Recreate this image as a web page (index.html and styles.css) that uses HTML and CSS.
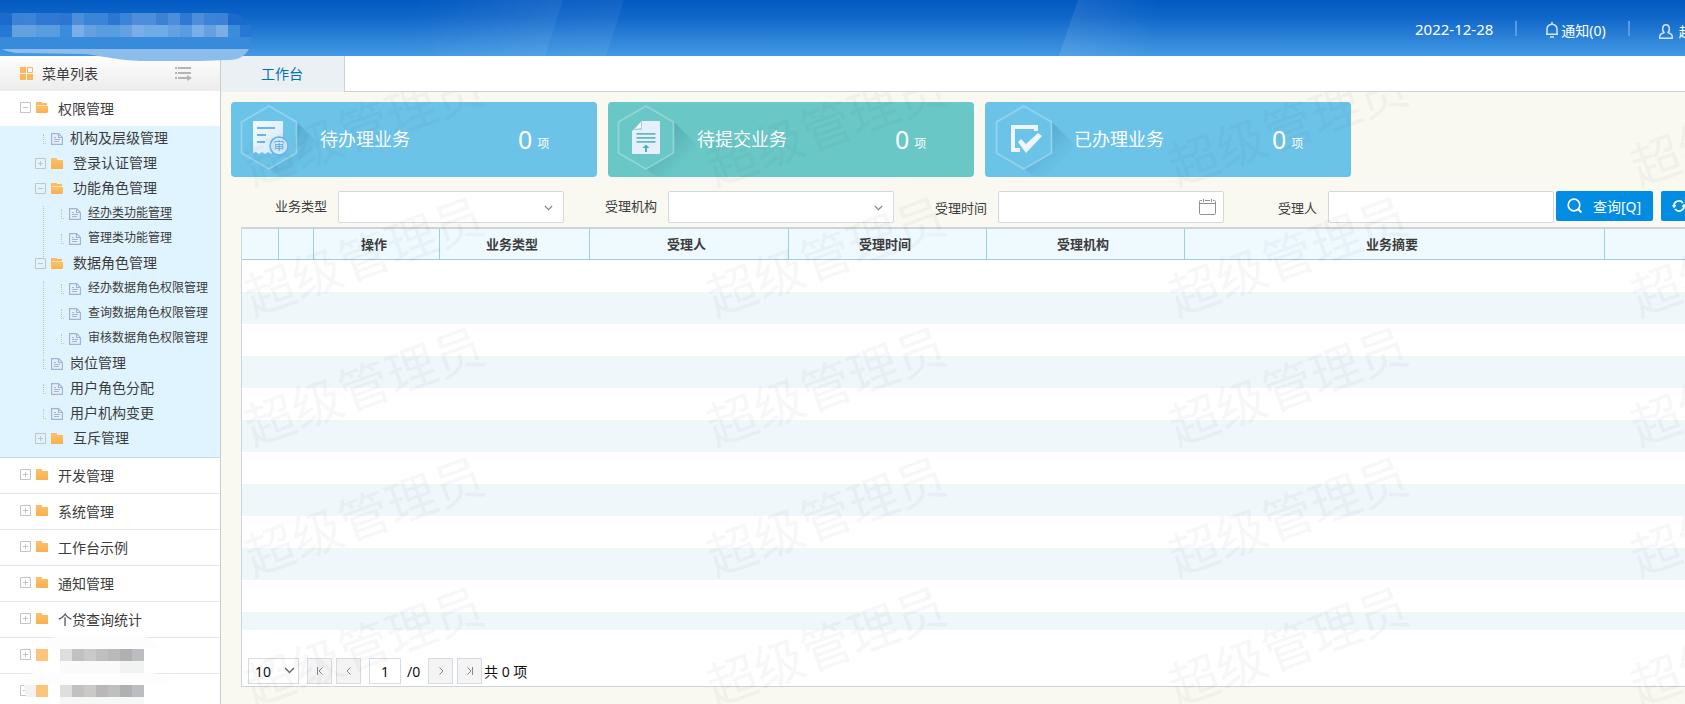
FILE: index.html
```html
<!DOCTYPE html>
<html lang="zh-CN">
<head>
<meta charset="utf-8">
<title>工作台</title>
<link rel="stylesheet" href="styles.css">
</head>
<body>
<svg class="defs" aria-hidden="true">
  <defs>
    <linearGradient id="g-folder" x1="0" y1="0" x2="0" y2="1"><stop offset="0" stop-color="#fdc16b"/><stop offset="1" stop-color="#f8b050"/></linearGradient>
    <linearGradient id="g-paper" x1="0" y1="0" x2="1" y2="1"><stop offset="0" stop-color="#f4fbff"/><stop offset="1" stop-color="#cfe8fb"/></linearGradient>
    <linearGradient id="g-shade" gradientUnits="userSpaceOnUse" x1="52" y1="36" x2="76" y2="60"><stop offset="0" stop-color="#0a4c74" stop-opacity=".2"/><stop offset="1" stop-color="#0a4c74" stop-opacity="0"/></linearGradient>
    <linearGradient id="g-ray" x1="0" y1="0" x2="1" y2="0"><stop offset="0" stop-color="#fff" stop-opacity="0"/><stop offset="1" stop-color="#fff" stop-opacity=".06"/></linearGradient>
    <linearGradient id="g-ray2" x1="0" y1="0" x2="1" y2="0"><stop offset="0" stop-color="#fff" stop-opacity=".1"/><stop offset="1" stop-color="#fff" stop-opacity="0"/></linearGradient>
    <symbol id="folder" viewBox="0 0 12 12"><path fill="url(#g-folder)" d="M0 0h6v2h6v9H0z"/></symbol>
    <symbol id="folder-open" viewBox="0 0 12 12"><path fill="#fdb95c" d="M0 0h6v1h5v3H0zM0 3h1v8H0z"/><path fill="#ffe3b5" d="M1 3h10v1H1z"/><path fill="url(#g-folder)" d="M1 4h11v6l-1 1H1z"/></symbol>
    <symbol id="doc" viewBox="0 0 12 12"><path fill="#e6f1fc" stroke="#9fb4d8" stroke-width="1.200" d="M.6.6h7l3.800 3.800v7H.6z"/><path fill="none" stroke="#9fb4d8" stroke-width="1.200" d="M7.500.500v4h4"/><path stroke="#9fb4d8" stroke-width="1.200" d="M3 4.500h2M3 6.500h6M3 8.500h5"/></symbol>
    <symbol id="plus" viewBox="0 0 11 11"><path fill="none" stroke="#c4c4c4" d="M.5.5h10v10H.5zM3 5.500h5M5.500 3v5"/></symbol>
    <symbol id="minus" viewBox="0 0 11 11"><path fill="none" stroke="#c4c4c4" d="M.5.5h10v10H.5zM3 5.500h5"/></symbol>
    <symbol id="down" viewBox="0 0 10 6"><path fill="none" stroke="currentColor" stroke-width="1.300" d="M1 .8l4 4 4-4"/></symbol>
    <symbol id="hex" viewBox="0 0 89 75"><path fill="url(#g-shade)" d="M66 20L88 42v32H48L38 67l28-16z"/></symbol>
    <symbol id="hexline" viewBox="0 0 89 75"><path fill="none" stroke="#fff" stroke-opacity=".27" stroke-width="1.800" d="M38 4l27.500 16v31L38 67 10.500 51V20z"/></symbol>
  </defs>
</svg>

<header class="top">
  <svg class="rays" width="1685" height="56" aria-hidden="true">
    <path fill="url(#g-ray)" d="M420 0h143l-18 56H400z"/>
    <path fill="url(#g-ray)" d="M440 0h184l-18 56H420z"/>
    <path fill="url(#g-ray2)" d="M1078 0h82v56h-101z"/>
  </svg>
  <svg class="brand" width="253" height="62" aria-hidden="true">
    <path fill="#1b6bcd" d="M0 13h130c20 3 50 1 70 0h30l10 2 6 10H0z"/>
    <path fill="#2579d4" d="M0 25h250l2 12H0z"/>
    <path fill="#388bdb" d="M0 37h252l-3 12H0z"/>
    <path fill="#8dbeeb" d="M2 49h247c-5 9-13 11-21 11l-28 1h-60c-20-1-35-4-54-7l-66-1C12 53 6 51 2 49z"/>
    <g>
      <path fill="#3b82d6" d="M12 13h12v12H12zM156 13h12v12h-12zM216 13h12v12h-12z"/>
      <path fill="#3079d2" d="M36 13h24v12H36zM180 13h12v12h-12z"/>
      <path fill="#3b85d8" d="M24 13h12v12H24zM84 13h24v12H84zM120 13h12v12h-12zM204 13h12v12h-12z"/>
      <path fill="#2b76d1" d="M60 13h24v12H60zM108 13h12v12h-12z"/>
      <path fill="#4c8edb" d="M72 13h12v12H72zM132 13h24v12h-24zM168 13h12v12h-12zM192 13h12v12h-12z"/>
      <path fill="#65a1e0" d="M12 25h24v12H12zM84 25h12v12H84zM120 25h12v12h-12zM168 25h12v12h-12zM204 25h12v12h-12z"/>
      <path fill="#579ddf" d="M36 25h24v12H36zM96 25h24v12H96zM180 25h12v12h-12z"/>
      <path fill="#3b8cda" d="M60 25h12v12H60zM228 25h12v12h-12z"/>
      <path fill="#7bade7" d="M72 25h12v12H72zM132 25h12v12h-12zM192 25h12v12h-12zM216 25h12v12h-12z"/>
      <path fill="#6fabe5" d="M144 25h24v12h-24z"/>
    </g>
  </svg>
  <div class="top-right">
    <span class="date">2022-12-28</span>
    <i class="sep"></i>
    <a class="top-link" href="#"><svg width="12" height="16" viewBox="0 0 12 16"><path fill="none" stroke="#d5e7fa" stroke-width="1.500" d="M1 11.500V7a5 4.800 0 0 1 10 0v4.500M0 12.200h12M6 0v2"/><path stroke="#d5e7fa" stroke-width="1.500" d="M4 15h4"/></svg>通知(0)</a>
    <i class="sep sep-b"></i>
    <a class="top-link user" href="#"><svg width="14" height="15" viewBox="0 0 14 15"><path fill="none" stroke="#d5e7fa" stroke-width="1.500" d="M5 8.500C2.500 6 3.500.800 7 .800S11.500 6 9 8.500c1 1 4.200 1 4.200 3.500v2.200H.8V12C.8 9.500 4 9.500 5 8.500z"/></svg>超级管理员</a>
  </div>
</header>

<div class="body">
  <nav class="side">
    <div class="side-head">
      <svg width="13" height="13" viewBox="0 0 13 13"><path fill="#fbb75a" d="M0 0h6v6H0zM0 7h6v6H0zM7 7h6v6H7z"/><path fill="none" stroke="#fbb75a" d="M7.500.500h5v5h-5z"/></svg>
      <span class="side-title">菜单列表</span>
      <button class="collapse" aria-label="收起菜单"><svg width="17" height="14" viewBox="0 0 17 14"><path fill="#b5b5b5" d="M0 0h2v2H0zM3 0h13v2H3zM0 5h2v2H0zM3 5h13v2H3zM0 10h2v2H0zM3 10h9V8l5 3-5 3v-2H3z"/></svg></button>
    </div>
    <ul class="tree">
      <li class="l1"><button class="tg" aria-label="收起"><svg><use href="#minus"/></svg></button><svg class="ic"><use href="#folder-open"/></svg><a href="#">权限管理</a></li>
      <li class="sub">
        <ul>
          <li class="row leaf"><i class="dots"></i><svg class="ic"><use href="#doc"/></svg><a href="#">机构及层级管理</a></li>
          <li class="row dir"><button class="tg" aria-label="展开"><svg><use href="#plus"/></svg></button><svg class="ic"><use href="#folder"/></svg><a href="#">登录认证管理</a></li>
          <li class="row dir"><button class="tg" aria-label="收起"><svg><use href="#minus"/></svg></button><svg class="ic"><use href="#folder-open"/></svg><a href="#">功能角色管理</a></li>
          <li class="rail"><ul>
            <li class="row leaf3"><i class="dots"></i><svg class="ic"><use href="#doc"/></svg><a class="active" href="#">经办类功能管理</a></li>
            <li class="row leaf3"><i class="dots"></i><svg class="ic"><use href="#doc"/></svg><a href="#">管理类功能管理</a></li>
          </ul></li>
          <li class="row dir"><button class="tg" aria-label="收起"><svg><use href="#minus"/></svg></button><svg class="ic"><use href="#folder-open"/></svg><a href="#">数据角色管理</a></li>
          <li class="rail"><ul>
            <li class="row leaf3"><i class="dots"></i><svg class="ic"><use href="#doc"/></svg><a href="#">经办数据角色权限管理</a></li>
            <li class="row leaf3"><i class="dots"></i><svg class="ic"><use href="#doc"/></svg><a href="#">查询数据角色权限管理</a></li>
            <li class="row leaf3"><i class="dots"></i><svg class="ic"><use href="#doc"/></svg><a href="#">审核数据角色权限管理</a></li>
          </ul></li>
          <li class="row leaf"><i class="dots"></i><svg class="ic"><use href="#doc"/></svg><a href="#">岗位管理</a></li>
          <li class="row leaf"><i class="dots"></i><svg class="ic"><use href="#doc"/></svg><a href="#">用户角色分配</a></li>
          <li class="row leaf"><i class="dots"></i><svg class="ic"><use href="#doc"/></svg><a href="#">用户机构变更</a></li>
          <li class="row dir"><button class="tg" aria-label="展开"><svg><use href="#plus"/></svg></button><svg class="ic"><use href="#folder"/></svg><a href="#">互斥管理</a></li>
        </ul>
      </li>
      <li class="l1"><button class="tg" aria-label="展开"><svg><use href="#plus"/></svg></button><svg class="ic"><use href="#folder"/></svg><a href="#">开发管理</a></li>
      <li class="l1"><button class="tg" aria-label="展开"><svg><use href="#plus"/></svg></button><svg class="ic"><use href="#folder"/></svg><a href="#">系统管理</a></li>
      <li class="l1"><button class="tg" aria-label="展开"><svg><use href="#plus"/></svg></button><svg class="ic"><use href="#folder"/></svg><a href="#">工作台示例</a></li>
      <li class="l1"><button class="tg" aria-label="展开"><svg><use href="#plus"/></svg></button><svg class="ic"><use href="#folder"/></svg><a href="#">通知管理</a></li>
      <li class="l1"><button class="tg" aria-label="展开"><svg><use href="#plus"/></svg></button><svg class="ic"><use href="#folder"/></svg><a href="#">个贷查询统计</a></li>
      <li class="l1 masked"><button class="tg" aria-label="展开"><svg><use href="#plus"/></svg></button><svg class="mask" width="130" height="38" viewBox="0 0 130 38" aria-hidden="true"><path fill="#fdfdfd" d="M4 12C6 3 14 0 24 0h82c10 0 15 5 17 12z"/><path fill="#fbc57c" d="M0 12h12v12H0z"/><path fill="#dcdfde" d="M24 12h12v12H24z"/><path fill="#c3c0c0" d="M36 12h12v12H36z"/><path fill="#cbcac8" d="M48 12h12v12H48z"/><path fill="#bebfc2" d="M60 12h12v12H60z"/><path fill="#bab9b7" d="M72 12h12v12H72z"/><path fill="#b1b0b0" d="M84 12h12v12H84z"/><path fill="#bcbdc1" d="M96 12h12v12H96z"/><path fill="#fafafa" d="M24 24h60v12H24z"/><path fill="#f1f3f3" d="M84 24h24v12H84z"/></svg></li>
      <li class="l1 masked"><button class="tg" aria-label="展开"><svg><use href="#minus"/></svg></button><svg class="mask" width="130" height="38" viewBox="0 0 130 38" aria-hidden="true"><path fill="#fdfdfd" d="M-15 12c2-10 9-12 17-12h111c12 0 20 5 22 12z"/><path fill="#f3f3f3" d="M-12 12H0v12h-10z"/><path fill="#fbc57c" d="M0 12h12v12H0z"/><path fill="#dcdfde" d="M24 12h12v12H24z"/><path fill="#c3c0c0" d="M36 12h12v12H36z"/><path fill="#cbc9c8" d="M48 12h12v12H48z"/><path fill="#bab7b8" d="M60 12h12v12H60z"/><path fill="#bebfc0" d="M72 12h12v12H72z"/><path fill="#b1b0b0" d="M84 12h12v12H84z"/><path fill="#bcbdc1" d="M96 12h12v12H96z"/><path fill="#f6f7f7" d="M24 24h84v12H24z"/></svg></li>
    </ul>
  </nav>

  <main class="main">
    <div class="tabs"><a class="tab" href="#">工作台</a></div>
    <div class="content">
      <div class="cards">
        <a class="card" href="#">
          <svg class="badge" viewBox="0 0 89 75"><use href="#hex"/><use href="#hexline"/>
            <path fill="url(#g-paper)" d="M24 19h27q1 0 1 1v32l-3-2-3 2-3-2-3 2-3-2-3 2-3-2-3 2-3-2-3 1V20q0-1 1-1z"/>
            <path stroke="#6cb4e2" stroke-width="1.800" d="M26 26h18M26 33h9M26 40h8"/>
            <circle cx="48" cy="44" r="9" fill="#cfeafc" stroke="#6cb4e2" stroke-width="1.500"/>
            <text class="stamp" x="48" y="48" text-anchor="middle">审</text></svg>
          <span class="card-name">待办理业务</span><b class="num">0</b><span class="unit">项</span>
        </a>
        <a class="card green" href="#">
          <svg class="badge" viewBox="0 0 89 75"><use href="#hex"/><use href="#hexline"/>
            <path fill="#e6f0fd" d="M34 19h17q1 0 1 1v31q0 1-1 1H25q-1 0-1-1V29z"/><path fill="#9ed4d8" d="M34 19v8q0 1-1 1h-8z"/><path fill="#fff" d="M33 20v6l-6 1z"/>
            <path stroke="#62b9c0" stroke-width="1.700" d="M28.500 31.800h19M28.500 35.800h19M28.500 39.800h19"/><path fill="#4eadb8" d="M38 42.500l3.500 3.500H39v4h-2v-4h-2.500z"/></svg>
          <span class="card-name">待提交业务</span><b class="num">0</b><span class="unit">项</span>
        </a>
        <a class="card" href="#">
          <svg class="badge" viewBox="0 0 89 75"><use href="#hex" x="1"/><use href="#hexline" x="1"/>
            <path fill="#f1f5ff" d="M26 23h27v6h-4v-2H30v19h5v4h-9z"/><path fill="#f1f5ff" d="M33 40l3-3 5 5 12-11 4 3-16 17z"/></svg>
          <span class="card-name">已办理业务</span><b class="num">0</b><span class="unit">项</span>
        </a>
      </div>

      <form class="filters">
        <div class="field"><label for="f-type">业务类型</label><span class="box"><select id="f-type"><option></option></select><svg class="arrow"><use href="#down"/></svg></span></div>
        <div class="field"><label for="f-org">受理机构</label><span class="box"><select id="f-org"><option></option></select><svg class="arrow"><use href="#down"/></svg></span></div>
        <div class="field typed"><label for="f-time">受理时间</label><span class="box"><input id="f-time" type="text"><svg class="cal" viewBox="0 0 17 17"><path fill="none" stroke="#909090" d="M3 2.500H1.500q-1 0-1 1v12q0 1 1 1h14q1 0 1-1v-12q0-1-1-1H14M6 2.500h5M.5 5.500h16M4.500 1v3M12.500 1v3"/></svg></span></div>
        <div class="field typed last"><label for="f-man">受理人</label><span class="box"><input id="f-man" type="text"></span></div>
        <button class="btn" type="button"><svg width="16" height="16" viewBox="0 0 16 16"><circle cx="7" cy="7" r="5.800" fill="none" stroke="#fff" stroke-width="1.700"/><path stroke="#fff" stroke-width="2" d="M11 11l3.500 3.500"/></svg>查询[Q]</button>
        <button class="btn reset" type="button" aria-label="重置"><svg width="14" height="14" viewBox="0 0 14 14"><path fill="none" stroke="#fff" stroke-width="1.700" d="M2 7.500A5 5 0 0 1 11 4M12 6.500A5 5 0 0 1 3 10"/><path fill="#fff" d="M0 6h4.500L2 9.500zM14 8H9.500L12 4.500z"/></svg></button>
      </form>

      <section class="grid">
        <table class="heads">
          <colgroup><col class="c1"><col class="c2"><col class="c3"><col class="c4"><col class="c5"><col class="c6"><col class="c6"><col class="c8"><col></colgroup>
          <thead><tr><th></th><th></th><th>操作</th><th>业务类型</th><th>受理人</th><th>受理时间</th><th>受理机构</th><th>业务摘要</th><th></th></tr></thead>
        </table>
        <div class="stripes"></div>
        <div class="pager">
          <span class="size"><select aria-label="每页条数"><option>10</option></select><svg class="arrow"><use href="#down"/></svg></span>
          <button aria-label="首页"><svg viewBox="0 0 8 8"><path d="M1.500 0v8M6.500.500L3 4l3.500 3.500"/></svg></button>
          <button aria-label="上一页"><svg viewBox="0 0 8 8"><path d="M5.500.500L2 4l3.500 3.500"/></svg></button>
          <input class="page" type="text" value="1" aria-label="页码">
          <span class="pages">/0</span>
          <button class="next" aria-label="下一页"><svg viewBox="0 0 8 8"><path d="M2.500.500L6 4 2.500 7.500"/></svg></button>
          <button aria-label="末页"><svg viewBox="0 0 8 8"><path d="M6.500 0v8M1.500.500L5 4 1.500 7.500"/></svg></button>
          <span class="total">共 0 项</span>
        </div>
      </section>

      <div class="marks" aria-hidden="true">
        <span>超级管理员</span><span>超级管理员</span><span>超级管理员</span><span>超级管理员</span>
        <span>超级管理员</span><span>超级管理员</span><span>超级管理员</span><span>超级管理员</span>
        <span>超级管理员</span><span>超级管理员</span><span>超级管理员</span><span>超级管理员</span>
        <span>超级管理员</span><span>超级管理员</span><span>超级管理员</span><span>超级管理员</span>
        <span>超级管理员</span><span>超级管理员</span><span>超级管理员</span><span>超级管理员</span>
      </div>
    </div>
  </main>
</div>
</body>
</html>
```
FILE: styles.css
```css
* { box-sizing: border-box; }
html, body { margin: 0; height: 100%; }
body {
  display: flex;
  flex-direction: column;
  overflow: hidden;
  font-family: "Noto Sans", "Noto Sans CJK SC", sans-serif;
  font-size: 14px;
  color: #3c3c3c;
  background: #f9f8f1;
}
ul { margin: 0; padding: 0; list-style: none; }
a { color: inherit; text-decoration: none; }
button, input, select { font: inherit; color: inherit; margin: 0; }
svg { display: block; flex: none; }
.defs { position: absolute; width: 0; height: 0; }

/* top bar */
.top {
  position: relative;
  z-index: 2;
  flex: none;
  display: flex;
  justify-content: flex-end;
  height: 56px;
  background: linear-gradient(#0159c1, #0f66c9 30%, #2e84d8 70%, #4399e4);
}
.rays, .brand { position: absolute; left: 0; top: 0; }
.top-right {
  display: flex;
  flex: 0 0 270px;
  align-items: center;
  overflow: hidden;
  white-space: nowrap;
  color: #fff;
}
.date { font-size: 15px; padding-top: 1px; }
.sep { flex: none; width: 2px; height: 15px; margin: 0 29px 0 22px; background: #5a9be0; }
.sep-b { margin: 0 29px 0 22px; }
.top-link { display: flex; align-items: center; gap: 3px; padding-top: 4px; }
.top-link.user { gap: 6px; padding-top: 6px; }

.body { flex: 1; display: flex; min-height: 0; }

/* side menu */
.side { flex: 0 0 221px; border-right: 1px solid #ccc; background: #fff; overflow: hidden; }
.side-head {
  display: flex;
  align-items: center;
  height: 35px;
  padding-left: 20px;
  background: linear-gradient(#fefefe, #ececec);
}
.side-title { padding: 0 0 2px 9px; }
.collapse { margin-left: auto; margin-right: 28px; border: 0; padding: 0; background: none; }
.tg { border: 0; padding: 0; background: none; flex: none; margin-right: 5px; }
.tg svg { width: 11px; height: 11px; }
.ic { width: 12px; height: 12px; margin-right: 10px; }
.l1 { display: flex; align-items: center; height: 36px; padding-left: 20px; border-bottom: 1px solid #e8e8ea; }
.l1 .tg, .l1 .ic, .l1 a { margin-bottom: 2px; }
.sub { padding-bottom: 6px; background: #e0f4ff; border-bottom: 1px solid #c8dbe6; }
.sub > ul { margin-top: -1px; }
.row { display: flex; align-items: center; height: 25px; }
.row a { white-space: nowrap; line-height: 20px; padding-bottom: 2px; }
.dir { padding-left: 35px; }
.leaf { padding-left: 43px; }
.leaf3 { padding-left: 61px; font-size: 12px; }
.leaf .ic, .leaf3 .ic { margin-right: 7px; }
.dots { flex: none; width: 3px; height: 10px; margin-right: 5px; border-left: 1px dotted #b9c3ca; border-bottom: 1px dotted #b9c3ca; }
.rail { position: relative; }
.rail::before { content: ""; position: absolute; left: 43px; top: 5px; bottom: -6px; border-left: 1px dotted #b9c3ca; }
.active { text-decoration: underline; text-underline-offset: 2px; }
.masked { position: relative; }
.mask { position: absolute; left: 36px; top: -1px; overflow: visible; }

/* work area */
.main { flex: 1; min-width: 0; display: flex; flex-direction: column; }
.tabs { display: flex; height: 36px; background: linear-gradient(#ccd2d8, #ccd2d8) bottom / 100% 1px no-repeat #fff; }
.tab { width: 124px; padding-right: 1px; border-right: 1px solid #ccd2d8; background: #ebf0f5; color: #0070bd; line-height: 35px; text-align: center; }
.content { position: relative; flex: 1; min-height: 0; display: flex; flex-direction: column; overflow: hidden; padding: 10px 0 17px; }
.cards { display: flex; gap: 11px; padding-left: 10px; }
.card {
  flex: 0 0 366px;
  display: flex;
  align-items: center;
  height: 75px;
  border-radius: 4px;
  background: #6bc3e8;
  color: #fff;
}
.card.green { background: #69c7c6; }
.badge { width: 89px; height: 75px; }
.stamp { font-size: 11px; fill: #5aa7dc; }
.card-name { width: 198px; padding-bottom: 3px; font-size: 18px; }
.num { font-size: 25px; font-weight: 400; padding-bottom: 2px; }
.unit { font-size: 12px; padding: 7px 0 0 5px; }

.filters { display: flex; align-items: center; height: 50px; padding: 10px 0 0 20px; }
.field { flex: 0 0 330px; display: flex; align-items: center; font-size: 13px; }
.field.last { flex-basis: 325px; }
.field label { width: 97px; padding: 0 11px 3px 0; text-align: right; }
.field.typed label { padding-bottom: 0; }
.box { position: relative; width: 226px; }
.box select, .box input { display: block; width: 100%; height: 32px; border: 1px solid #d5d8db; border-radius: 2px; background: #fff; appearance: none; }
.arrow { position: absolute; pointer-events: none; width: 9px; height: 6px; right: 11px; top: 14px; color: #888; }
.cal { position: absolute; right: 8px; top: 7px; width: 17px; height: 17px; }
.btn {
  flex: none;
  display: flex;
  align-items: center;
  gap: 10px;
  width: 97px;
  height: 30px;
  margin-bottom: 2px;
  padding: 0 11px;
  border: 0;
  border-radius: 2px;
  background: #028de2;
  color: #fff;
  white-space: nowrap;
}
.reset { margin-left: 8px; }

.grid { flex: 1; display: flex; flex-direction: column; min-height: 0; margin-left: 20px; border: solid #ccd3d9; border-width: 2px 0 1px 1px; background: #fff; }
.heads { width: 100%; table-layout: fixed; border-collapse: separate; border-spacing: 0; font-size: 13px; background: #eefaff; }
.heads th { height: 31px; padding: 0 5px 0 0; border-right: 1px solid #9dd1d3; border-bottom: 1px solid #9dd1d3; line-height: 20px; }
.heads th:last-child { border-right: 0; }
.c1 { width: 37px; }
.c2 { width: 35px; }
.c3 { width: 126px; }
.c4 { width: 150px; }
.c5 { width: 199px; }
.c6 { width: 198px; }
.c8 { width: 420px; }
.stripes { flex: 1; background: repeating-linear-gradient(#fff 0 32px, #eef8fa 32px 64px); }
.pager { display: flex; align-items: center; height: 56px; padding: 27px 0 1px 6px; color: #111; }
.pager select, .pager input, .pager button { height: 26px; border: 1px solid #d5dae3; background: #fff; appearance: none; }
.size { position: relative; margin-right: 8px; }
.size select { display: block; width: 51px; padding: 0 6px; }
.size .arrow { width: 11px; height: 7px; top: 9px; right: 4px; color: #666; }
.pager button { width: 25px; margin-right: 4px; padding: 0 8px; background: #f4f4f4; }
.pager button svg { width: 8px; height: 8px; }
.pager button path { fill: none; stroke: #888; }
.pager .page { width: 32px; margin-left: 4px; padding: 0; text-align: center; }
.pages { width: 27px; padding-left: 6px; }
.pager button + .total { margin-left: -2px; }

/* repeated account-name watermark */
.marks {
  position: absolute;
  left: -88px;
  top: -31px;
  display: grid;
  grid-template-columns: repeat(4, 462px);
  grid-auto-rows: 130px;
  pointer-events: none;
}
.marks span {
  place-self: center;
  font-size: 50px;
  line-height: 50px;
  white-space: nowrap;
  color: rgba(80, 80, 80, 0.045);
  transform: rotate(-20deg);
}
```
